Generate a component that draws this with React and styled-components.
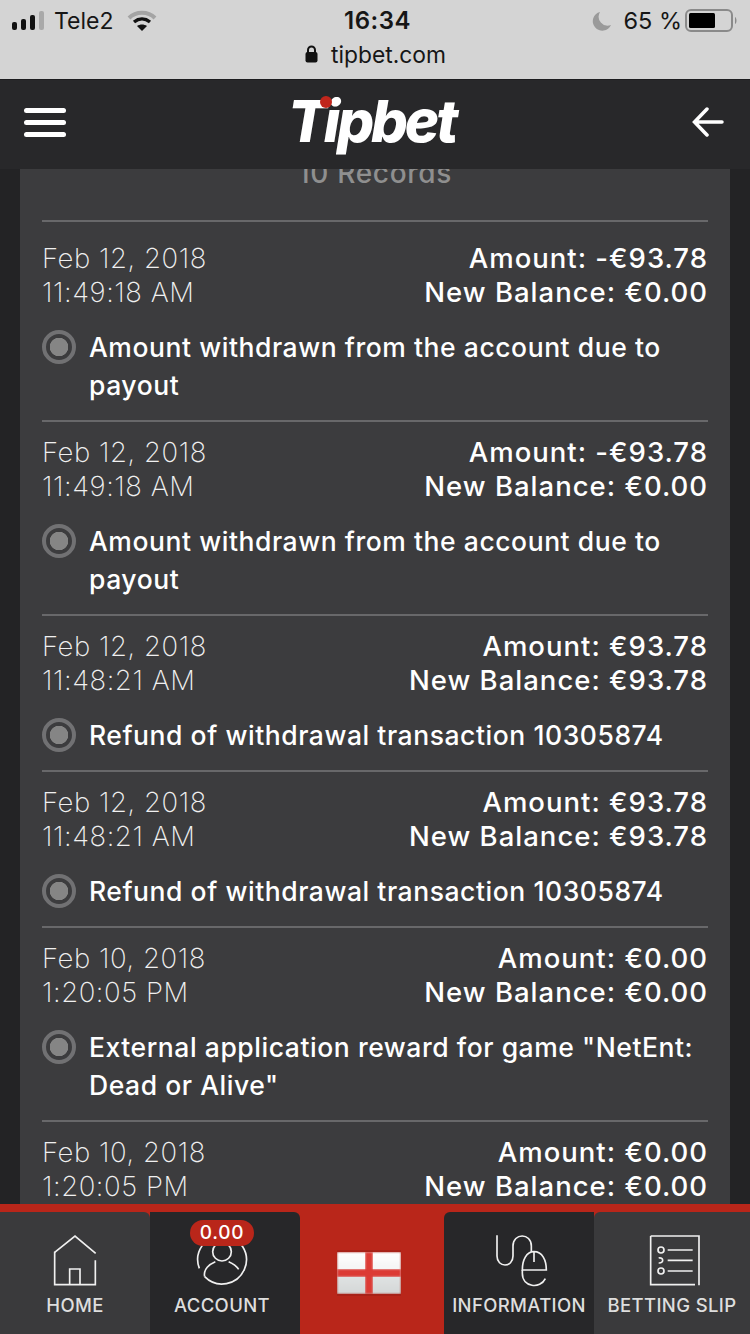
import React from 'react'
import styled, { createGlobalStyle } from 'styled-components'

const GlobalStyle = createGlobalStyle`
  html, body {
    margin: 0;
    padding: 0;
    background: #232325;
  }
  * {
    box-sizing: border-box;
  }
`

const Page = styled.div`
  width: 750px;
  height: 1334px;
  display: flex;
  flex-direction: column;
  overflow: hidden;
  background: #232325;
  font-family: Inter, "Liberation Sans", sans-serif;
`

/* ios chrome */
const StatusBar = styled.div`
  flex: 0 0 80px;
  background: #d4d4d4;
  border-bottom: 1px solid #1d1d1f;
  color: #161616;
  font-size: 23px;
  padding: 0 11px 0 12px;
`
const StatusRow = styled.div`
  display: grid;
  grid-template-columns: 1fr auto 1fr;
  align-items: center;
  height: 41px;
`
const StatusLeft = styled.div`
  display: flex;
  align-items: center;
  gap: 9px;
`
const Carrier = styled.span`
  margin-right: 5px;
`
const Clock = styled.div`
  margin-left: 4px;
  font-size: 24px;
  font-weight: 600;
  letter-spacing: 0.5px;
`
const StatusRight = styled.div`
  display: flex;
  align-items: center;
  justify-content: flex-end;
  gap: 3px;
`
const Percent = styled.span`
  margin-left: 8px;
  font-size: 23.5px;
`
const Address = styled.div`
  display: flex;
  align-items: center;
  justify-content: center;
  gap: 13px;
  height: 26px;
  font-size: 22.8px;
`

const Header = styled.header`
  flex: 0 0 89px;
  position: relative;
  z-index: 2;
  display: grid;
  grid-template-columns: 1fr auto 1fr;
  align-items: center;
  padding: 0 26px 0 24px;
  background: #28282a;
`
const Burger = styled.div`
  display: flex;
  flex-direction: column;
  gap: 7px;
  width: 42px;
  margin-bottom: 5px;
`
const BurgerLine = styled.span`
  height: 5px;
  border-radius: 3px;
  background: #fff;
`
const Logo = styled.div`
  position: relative;
  margin: 0 5px 8px 0;
  color: #fff;
  font-size: 58px;
  font-weight: 800;
  font-style: italic;
  line-height: 60px;
  letter-spacing: -3.1px;
`
const LogoDot = styled.span`
  position: absolute;
  left: 32px;
  top: 5px;
  width: 12px;
  height: 12px;
  border-radius: 50%;
  background: #c1261c;
`
const HeaderRight = styled.div`
  display: flex;
  justify-content: flex-end;
  margin-bottom: 6px;
`

const Main = styled.main`
  flex: 1;
  min-height: 0;
  overflow: hidden;
`
const Card = styled.section`
  margin: 0 20px;
  padding: 0 22px;
  background: #3c3c3e;
`
const RecordCount = styled.div`
  margin-top: -13px;
  padding-bottom: 30px;
  text-align: center;
  color: #8f8f8f;
  font-size: 28px;
  font-weight: 500;
  line-height: 34px;
  letter-spacing: 0.7px;
`
const Row = styled.article`
  border-top: 2px solid #68686a;
  padding: 13px 0 16px;

  &:first-of-type {
    padding-top: 19px;
  }
`
const RowHead = styled.div`
  display: flex;
  justify-content: space-between;
  line-height: 34px;
`
const DateCol = styled.div`
  color: #f0f0f0;
  font-size: 27.5px;
  font-weight: 200;
  letter-spacing: 0.55px;
`
const AmountCol = styled.div`
  color: #fff;
  font-size: 27.5px;
  font-weight: 500;
  letter-spacing: 1px;
  text-align: right;
`
const Desc = styled.div`
  display: flex;
  align-items: flex-start;
  gap: 13px;
  margin-top: 19px;
  color: #fff;
  font-size: 26.5px;
  font-weight: 500;
  line-height: 38px;
  letter-spacing: 0.55px;
`
const Radio = styled.span`
  flex: 0 0 34px;
  height: 34px;
  margin-top: 2px;
  border: 4px solid #717173;
  border-radius: 50%;
  background: radial-gradient(circle, #858585 0 9px, transparent 9.5px);
`

/* bottom nav */
const TabBar = styled.nav`
  flex: 0 0 130px;
  display: grid;
  grid-template-columns: 150px 150px 144px 150px 156px;
  padding-top: 8px;
  background: #b9261a;
`
const Tab = styled.div`
  position: relative;
  display: flex;
  flex-direction: column;
  align-items: center;
  padding: 21px ${p => p.$shift || 0}px 0 0;
  background: ${p => p.$dark ? '#272729' : '#3a3a3c'};
  border-radius: ${p => p.$left ? '6px 0 0 0' : '0 6px 0 0'};
`
const TabLabel = styled.span`
  margin-top: 7px;
  color: #dedede;
  font-size: 18.5px;
  font-weight: 500;
  line-height: 24px;
  letter-spacing: 0.35px;
  white-space: nowrap;
`
const Badge = styled.span`
  position: absolute;
  top: 8px;
  left: 40px;
  width: 64px;
  height: 26px;
  border-radius: 13px;
  background: #b9261a;
  color: #fff;
  font-size: 19px;
  font-weight: 500;
  line-height: 26px;
  letter-spacing: 0.8px;
  text-align: center;
`
const FlagTab = styled.div`
  display: flex;
  align-items: center;
  justify-content: center;
  padding: 0 6px 0 0;
`

const NavIcon = styled.svg`
  width: 50px;
  height: 53px;
  overflow: visible;
  fill: none;
  stroke: #f0f0f0;
  stroke-width: 5;
`

const records = [
  { date: 'Feb 12, 2018', time: '11:49:18 AM', amount: '-€93.78', balance: '€0.00', text: 'Amount withdrawn from the account due to payout' },
  { date: 'Feb 12, 2018', time: '11:49:18 AM', amount: '-€93.78', balance: '€0.00', text: 'Amount withdrawn from the account due to payout' },
  { date: 'Feb 12, 2018', time: '11:48:21 AM', amount: '€93.78', balance: '€93.78', text: 'Refund of withdrawal transaction 10305874' },
  { date: 'Feb 12, 2018', time: '11:48:21 AM', amount: '€93.78', balance: '€93.78', text: 'Refund of withdrawal transaction 10305874' },
  { date: 'Feb 10, 2018', time: '1:20:05 PM', amount: '€0.00', balance: '€0.00', text: 'External application reward for game "NetEnt: Dead or Alive"' },
  { date: 'Feb 10, 2018', time: '1:20:05 PM', amount: '€0.00', balance: '€0.00', text: 'External application reward for game "NetEnt: Dead or Alive"' },
]

const Signal = () => (
  <svg width="33" height="20" viewBox="0 0 33 20">
    <rect x="0" y="11" width="5" height="8" rx="2" fill="#111" />
    <rect x="9" y="8" width="5" height="11" rx="2" fill="#111" />
    <rect x="18" y="4" width="5" height="15" rx="2" fill="#111" />
    <rect x="27" y="0" width="5" height="19" rx="2" fill="#a9a9a9" />
  </svg>
)

const Wifi = () => (
  <svg width="30" height="22" viewBox="0 0 30 22" fill="none">
    <path d="M2 8 C9 1 21 1 28 8" stroke="#a4a4a4" strokeWidth="4" />
    <path d="M7 12 C12 8 18 8 23 12" stroke="#111" strokeWidth="3.5" />
    <path d="M15 21 L10 16 C13 14 17 14 20 16 Z" fill="#111" />
  </svg>
)

const Moon = () => (
  <svg width="20" height="20" viewBox="0 0 20 20">
    <path d="M8 1 A9.5 9.5 0 1 0 19 14 A9 9 0 0 1 8 1 Z" fill="#9a9a9a" />
  </svg>
)

const Battery = () => (
  <svg width="54" height="24" viewBox="0 0 54 24">
    <rect x="1" y="1" width="46" height="21" rx="5" fill="none" stroke="#8a8a8a" strokeWidth="2" />
    <rect x="4" y="4" width="26" height="15" rx="1.5" fill="#000" />
    <path d="M50 8 C52 9 52 14 50 15 Z" fill="#8a8a8a" />
  </svg>
)

const Lock = () => (
  <svg width="13" height="18" viewBox="0 0 13 18">
    <path d="M3 8 V5 a3.5 3.5 0 0 1 7 0 V8" fill="none" stroke="#111" strokeWidth="2" />
    <rect x="0.5" y="7" width="12" height="10.5" rx="2" fill="#111" />
  </svg>
)

const BackArrow = () => (
  <svg width="32" height="30" viewBox="0 0 32 30" fill="none" stroke="#fff" strokeWidth="3.5" strokeLinecap="round">
    <path d="M15 2 L2.5 15 L15 28 M3 15 H30" />
  </svg>
)

const HomeIcon = () => (
  <NavIcon viewBox="150 99 150 159">
    <path d="M163 158 L225 108 L287 160" />
    <path d="M164 155 V254 H286 V181" />
    <path d="M209 254 V207 H240 V254" />
  </NavIcon>
)

const AccountIcon = () => (
  <NavIcon viewBox="590 99 150 159">
    <path d="M613 230 A73 73 0 1 0 597 205" />
    <circle cx="665" cy="155" r="28" />
    <path d="M613 230 C608 208 628 192 645 185" />
    <path d="M685 185 C697 190 708 197 715 208" />
  </NavIcon>
)

const MouseIcon = () => (
  <NavIcon viewBox="583 99 150 159">
    <path d="M592 106 V168 C592 204 640 204 640 168 V138 C640 98 695 98 695 138 V155" />
    <path d="M668 210 C668 180 680 155 703 155 C728 155 740 180 740 210 Z" />
    <path d="M703 155 V186" />
    <path d="M668 210 V220 C668 262 722 268 737 236" />
  </NavIcon>
)

const SlipIcon = () => (
  <NavIcon viewBox="1041 99 150 159">
    <path d="M1052 108 H1197 V256" />
    <path d="M1052 108 V254 H1185" />
    <circle cx="1083" cy="150" r="9" />
    <path d="M1076 174 C1090 170 1094 190 1076 189" />
    <circle cx="1083" cy="213" r="9" />
    <path d="M1103 150 H1178 M1103 181 H1178 M1103 213 H1178" />
  </NavIcon>
)

const Flag = () => (
  <svg width="64" height="46" viewBox="0 0 64 46">
    <defs>
      <filter id="soft" x="0" y="0" width="100%" height="100%">
        <feGaussianBlur stdDeviation="1" />
      </filter>
      <linearGradient id="cloth" x1="0" y1="0" x2="0" y2="1">
        <stop offset="0" stopColor="#ffffff" />
        <stop offset="0.42" stopColor="#f4f4f4" />
        <stop offset="0.6" stopColor="#dfe3e3" />
        <stop offset="1" stopColor="#d4d6d6" />
      </linearGradient>
    </defs>
    <rect width="64" height="46" fill="#a82218" />
    <rect y="2" width="64" height="42" fill="url(#cloth)" filter="url(#soft)" />
    <rect x="28" y="2" width="8" height="42" fill="#dc3b34" filter="url(#soft)" />
    <rect y="19" width="64" height="8" fill="#dc3b34" filter="url(#soft)" />
  </svg>
)

const Record = ({ date, time, amount, balance, text }) => (
  <Row>
    <RowHead>
      <DateCol>{date}<br />{time}</DateCol>
      <AmountCol>Amount: {amount}<br />New Balance: {balance}</AmountCol>
    </RowHead>
    <Desc>
      <Radio />
      <span>{text}</span>
    </Desc>
  </Row>
)

export default function App() {
  return (
    <Page>
      <GlobalStyle />
      <StatusBar>
        <StatusRow>
          <StatusLeft>
            <Signal />
            <Carrier>Tele2</Carrier>
            <Wifi />
          </StatusLeft>
          <Clock>16:34</Clock>
          <StatusRight>
            <Moon />
            <Percent>65 %</Percent>
            <Battery />
          </StatusRight>
        </StatusRow>
        <Address>
          <Lock />
          <span>tipbet.com</span>
        </Address>
      </StatusBar>
      <Header>
        <Burger>
          <BurgerLine />
          <BurgerLine />
          <BurgerLine />
        </Burger>
        <Logo>
          Tipbet
          <LogoDot />
        </Logo>
        <HeaderRight>
          <BackArrow />
        </HeaderRight>
      </Header>
      <Main>
        <Card>
          <RecordCount>10 Records</RecordCount>
          {records.map((r, i) => <Record key={i} {...r} />)}
        </Card>
      </Main>
      <TabBar>
        <Tab>
          <HomeIcon />
          <TabLabel>HOME</TabLabel>
        </Tab>
        <Tab $dark $shift={6}>
          <AccountIcon />
          <Badge>0.00</Badge>
          <TabLabel>ACCOUNT</TabLabel>
        </Tab>
        <FlagTab>
          <Flag />
        </FlagTab>
        <Tab $dark $left>
          <MouseIcon />
          <TabLabel>INFORMATION</TabLabel>
        </Tab>
        <Tab $left>
          <SlipIcon />
          <TabLabel>BETTING SLIP</TabLabel>
        </Tab>
      </TabBar>
    </Page>
  )
}
